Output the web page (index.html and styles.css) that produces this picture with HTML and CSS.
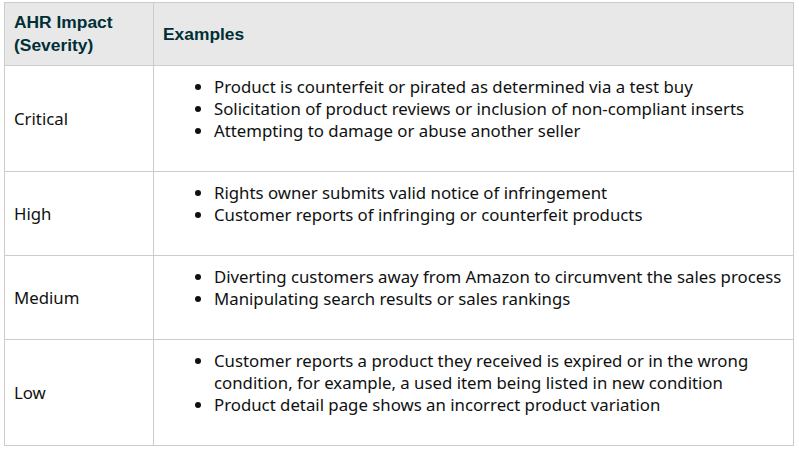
FILE: index.html
```html
<!DOCTYPE html>
<html>
<head>
<meta charset="utf-8">
<link rel="stylesheet" href="styles.css">
</head>
<body>
<table class="ahr">
  <thead>
    <tr>
      <th class="col-sev">AHR Impact<br>(Severity)</th>
      <th>Examples</th>
    </tr>
  </thead>
  <tbody>
    <tr>
      <td class="col-sev">Critical</td>
      <td>
        <ul>
          <li>Product is counterfeit or pirated as determined via a test buy</li>
          <li>Solicitation of product reviews or inclusion of non-compliant inserts</li>
          <li>Attempting to damage or abuse another seller</li>
        </ul>
      </td>
    </tr>
    <tr>
      <td class="col-sev">High</td>
      <td>
        <ul>
          <li>Rights owner submits valid notice of infringement</li>
          <li>Customer reports of infringing or counterfeit products</li>
        </ul>
      </td>
    </tr>
    <tr>
      <td class="col-sev">Medium</td>
      <td>
        <ul>
          <li>Diverting customers away from Amazon to circumvent the sales process</li>
          <li>Manipulating search results or sales rankings</li>
        </ul>
      </td>
    </tr>
    <tr>
      <td class="col-sev">Low</td>
      <td>
        <ul>
          <li>Customer reports a product they received is expired or in the wrong condition, for example, a used item being listed in new condition</li>
          <li>Product detail page shows an incorrect product variation</li>
        </ul>
      </td>
    </tr>
  </tbody>
</table>
</body>
</html>
```
FILE: styles.css
```css
html, body {
  margin: 0;
  background: #ffffff;
}
body {
  padding: 2px 0 0 4px;
}
.ahr {
  border-collapse: collapse;
  width: 790px;
  font-family: "Noto Sans", "Open Sans", sans-serif;
  font-size: 16.8px;
  color: #0f1111;
}
.ahr th, .ahr td {
  border: 1px solid #cccccc;
  text-align: left;
  padding: 10px 10px 10px 9px;
}
.ahr th {
  background: #e8e8e8;
  font-family: "Liberation Sans", Arial, sans-serif;
  font-weight: bold;
  font-size: 17.4px;
  line-height: 23px;
  color: #002f36;
  padding: 8px 10px 8px 9px;
  vertical-align: middle;
}
.ahr .col-sev {
  width: 129px;
}
.ahr td {
  vertical-align: middle;
  line-height: 22px;
}
.ahr ul {
  margin: 0 0 19px 0;
  padding-left: 51px;
}
.ahr li {
  margin: 0;
}
```
